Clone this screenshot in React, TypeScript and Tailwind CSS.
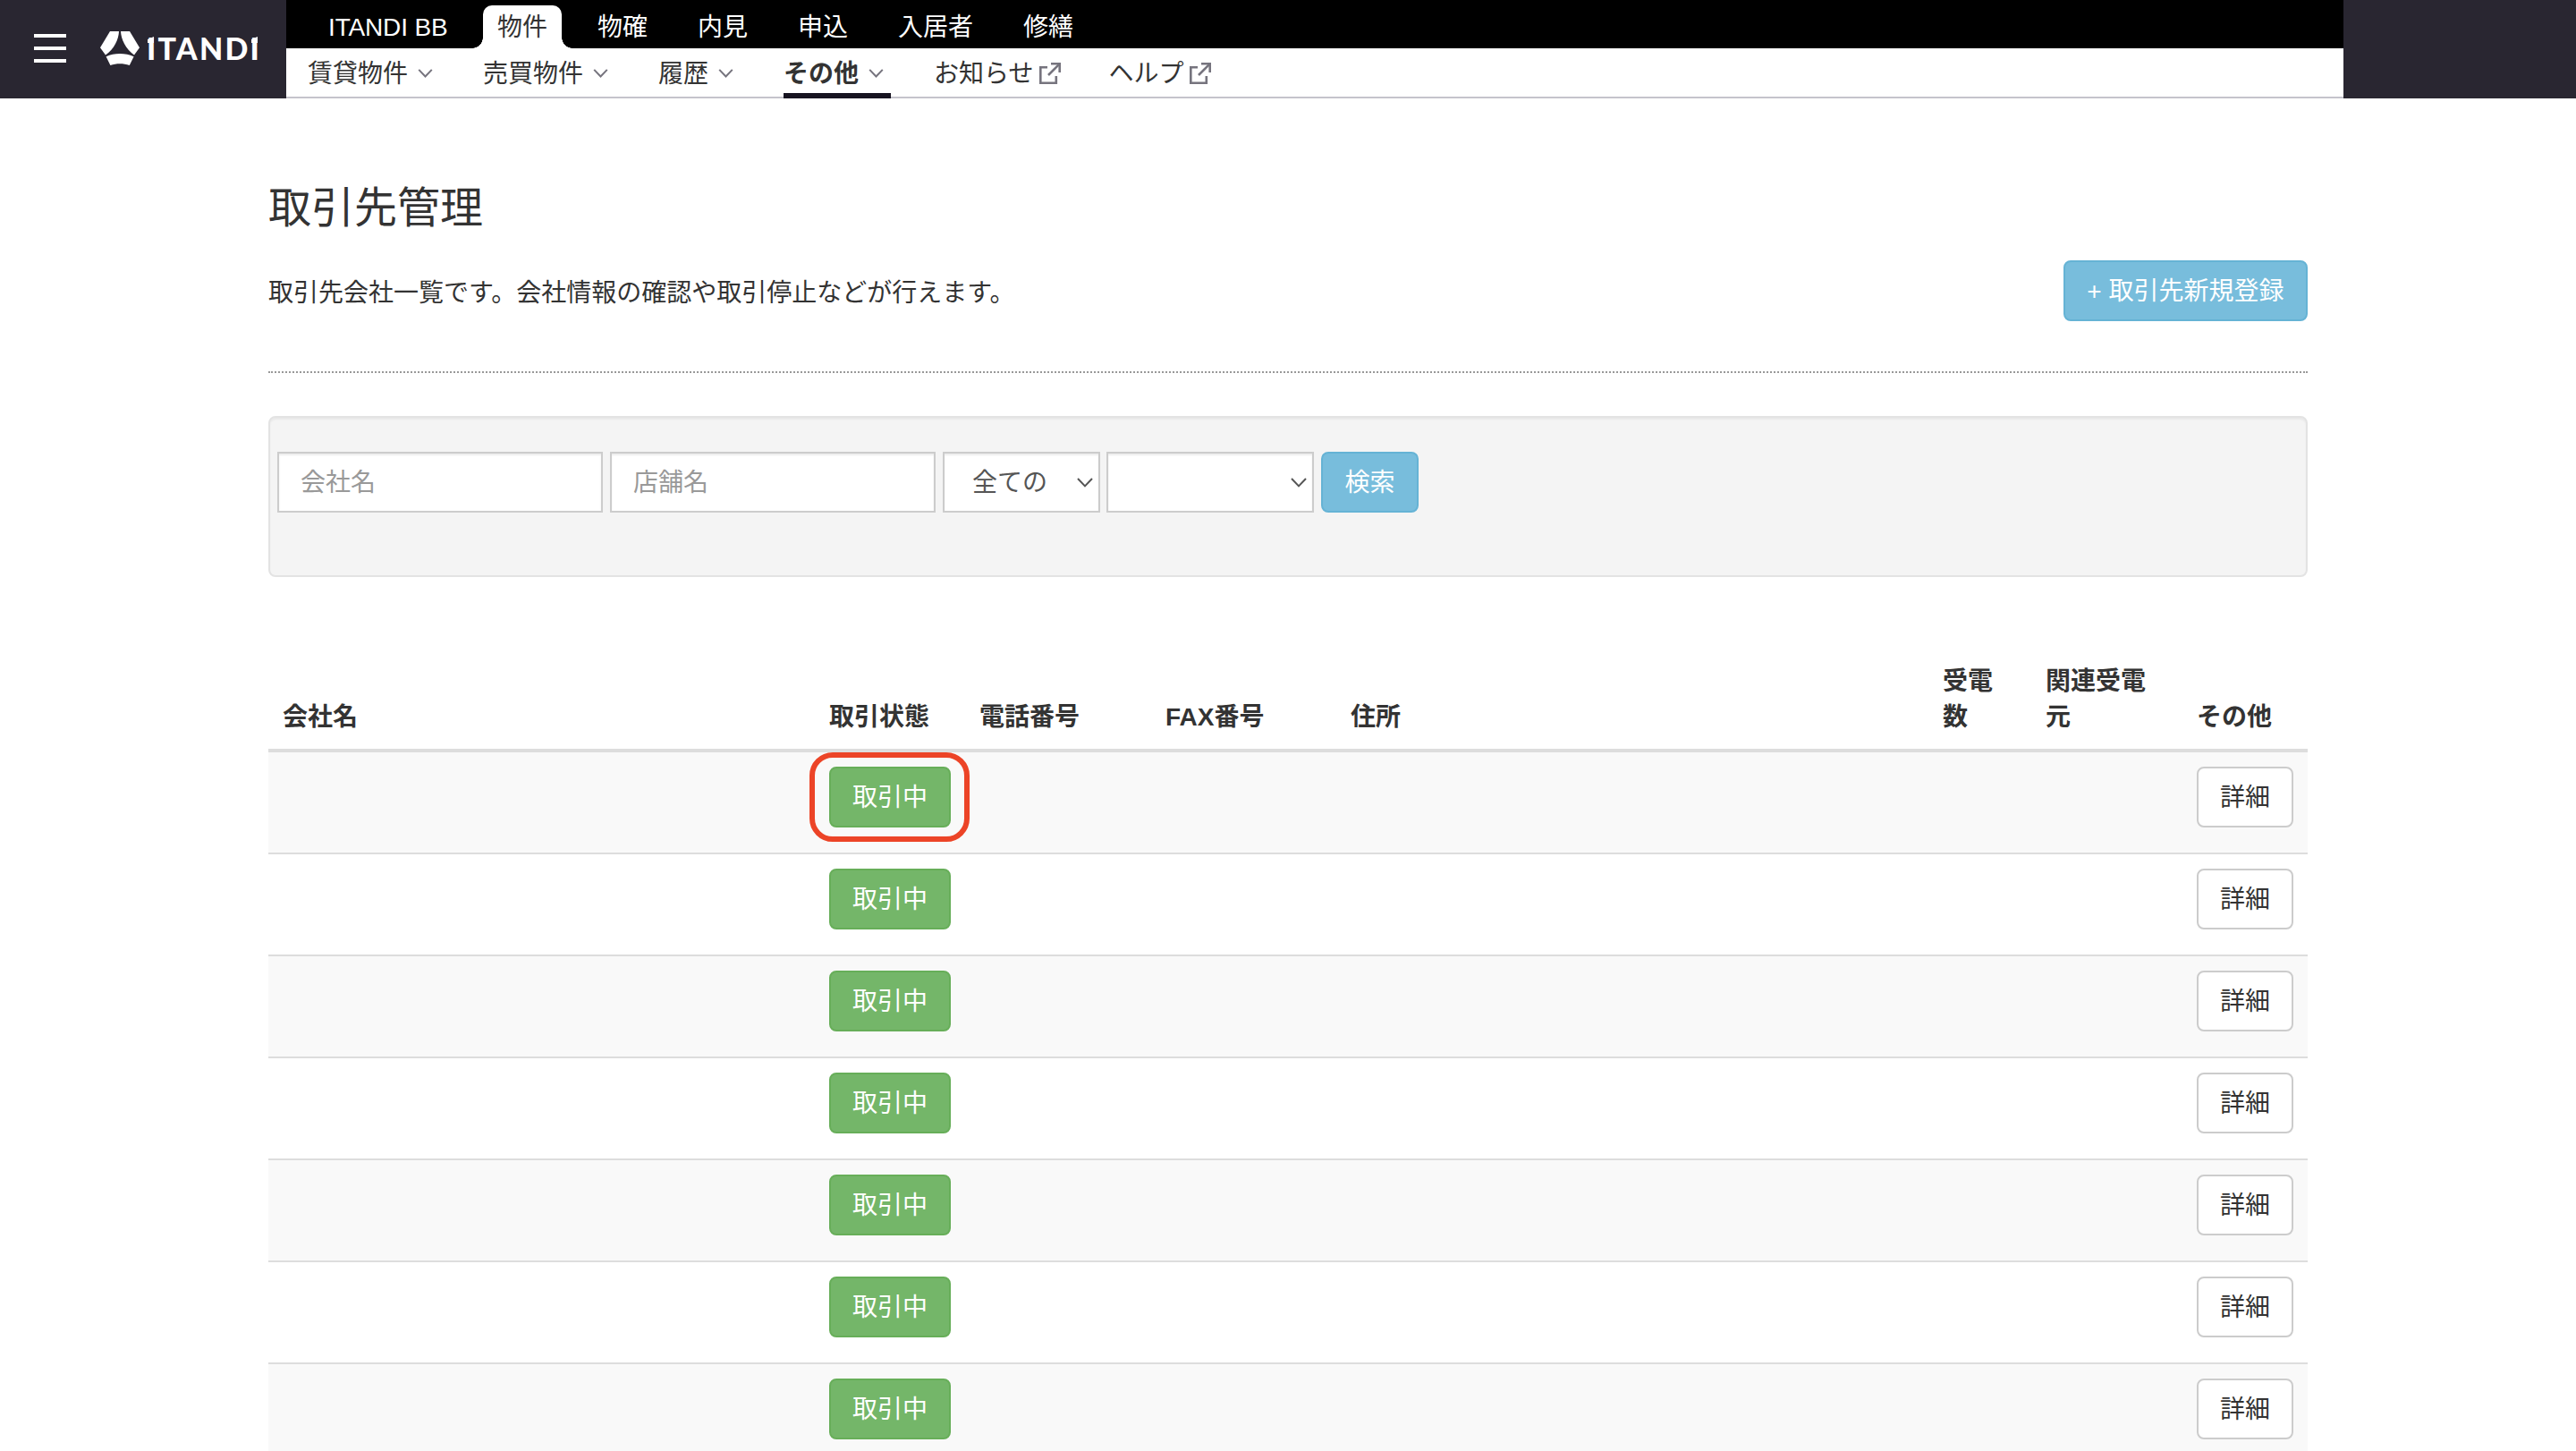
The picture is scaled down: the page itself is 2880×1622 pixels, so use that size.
import type { ReactNode } from "react";

interface MenuItem {
  label: string;
  icon: "chevron" | "external";
  active?: boolean;
}

const TABS = ["ITANDI BB", "物件", "物確", "内見", "申込", "入居者", "修繕"];
const ACTIVE_TAB = "物件";

const MENU: MenuItem[] = [
  { label: "賃貸物件", icon: "chevron" },
  { label: "売買物件", icon: "chevron" },
  { label: "履歴", icon: "chevron" },
  { label: "その他", icon: "chevron", active: true },
  { label: "お知らせ", icon: "external" },
  { label: "ヘルプ", icon: "external" },
];

const COLUMNS = [
  { label: "会社名", width: "w-[611px]" },
  { label: "取引状態", width: "w-[168px]" },
  { label: "電話番号", width: "w-[208px]" },
  { label: "FAX番号", width: "w-[207px]" },
  { label: "住所", width: "w-[662px]" },
  { label: "受電数", width: "w-[115px]" },
  { label: "関連受電元", width: "w-[169px]" },
  { label: "その他", width: "w-[140px]" },
];

const ROWS = [1, 2, 3, 4, 5, 6, 7];

function Logo() {
  return (
    <div className="flex items-center">
      <svg className="h-[38px] w-[44px]" viewBox="0 0 44 38" fill="#fff">
        <path d="M11 0H21C20.6 9 15.8 19.5 6 26.5L0 18.2Z" />
        <path d="M23 0H33L44 18.2L38 26.5C28.4 19.5 23.4 9 23 0Z" />
        <path d="M6.6 28.2C16 24 28 24 37.6 28.2L32.8 38C26 35.6 18 35.6 11.4 38Z" />
      </svg>
      <span className="relative ml-[8px] font-[Lato] text-[34px] leading-[38px] font-black tracking-[2.2px] text-white">
        ITANDI
        {/* flags on the first and last stems */}
        <svg className="absolute top-[6px] left-0 h-[8px] w-[126px]" viewBox="0 0 126 8" fill="#fff">
          <path d="M1 3L8 0V7H1Z" />
          <path d="M117 3L124 0V7H117Z" />
        </svg>
      </span>
    </div>
  );
}

function Chevron({ className }: { className: string }) {
  return (
    <svg className={className} viewBox="0 0 18 11" fill="none" stroke="currentColor">
      <path d="M1 1L9 9.4L17 1" />
    </svg>
  );
}

function ExternalIcon() {
  return (
    <svg className="mr-[6px] ml-[6px] h-6 w-6 text-[#76747e]" viewBox="0 0 24 24" fill="none" stroke="currentColor" strokeWidth="2.6">
      <path d="M9 5.2H1.3V22.7H18.8V15" />
      <path d="M13 1.3H22.7V11" />
      <path d="M22.4 1.6L10 14" />
    </svg>
  );
}

function Header() {
  return (
    <header className="flex h-[110px] bg-[#292631]">
      <div className="flex w-[320px] pt-[35px] pl-[38px]">
        <div className="mt-[3px] mr-[38px] flex h-8 w-9 flex-col justify-between">
          <span className="h-1 bg-white" />
          <span className="h-1 bg-white" />
          <span className="h-1 bg-white" />
        </div>
        <div className="h-[38px]">
          <Logo />
        </div>
      </div>
      <div className="w-[2300px]">
        <nav className="flex h-[54px] gap-6 bg-black pt-[6px] pl-[31px]">
          {TABS.map((tab) =>
            tab === ACTIVE_TAB ? (
              <div key={tab} className="relative h-12 rounded-t-[10px] bg-white px-4 leading-[50px]">
                {tab}
                <span className="absolute bottom-0 -left-[12px] h-3 w-3 bg-[radial-gradient(circle_at_0_0,transparent_11.5px,#fff_12px)]" />
                <span className="absolute -right-[12px] bottom-0 h-3 w-3 bg-[radial-gradient(circle_at_100%_0,transparent_11.5px,#fff_12px)]" />
              </div>
            ) : (
              <div
                key={tab}
                className="px-4 leading-[50px] whitespace-nowrap text-white first:w-[165px] first:tracking-[-0.15px]"
              >
                {tab}
              </div>
            ),
          )}
        </nav>
        <nav className="flex h-14 gap-12 border-b-2 border-[#c5c4cc] bg-white pl-6">
          {MENU.map((item) => (
            <div
              key={item.label}
              className={
                item.active
                  ? "flex h-14 items-center border-b-[6px] border-[#171421] font-bold"
                  : "flex h-14 items-center border-b-[6px] border-transparent"
              }
            >
              <span className="pt-[7px] leading-[43px]">{item.label}</span>
              {item.icon === "chevron" ? (
                <Chevron className="mt-[6px] mr-[8px] ml-[11px] h-[10px] w-[17px] stroke-[2.2] text-[#76747e]" />
              ) : (
                <span className="mt-[5px]">
                  <ExternalIcon />
                </span>
              )}
            </div>
          ))}
        </nav>
      </div>
    </header>
  );
}

function PrimaryButton({ children }: { children: ReactNode }) {
  return (
    <button className="h-[68px] rounded-[8px] border-2 border-[#65b3d5] bg-[#78bddc] px-[24.5px] pt-[2px] leading-[60px] whitespace-nowrap text-white">
      {children}
    </button>
  );
}

function SearchPanel() {
  const field =
    "h-[68px] border-2 border-[#ccc] bg-white shadow-[inset_0_2px_2px_rgba(0,0,0,0.075)]";
  return (
    <div className="mt-12 flex h-[180px] items-start rounded-[8px] border-2 border-[#e3e3e3] bg-[#f4f4f4] pt-[38px] pl-2 shadow-[inset_0_2px_2px_rgba(0,0,0,0.05)]">
      <input
        className={`${field} w-[364px] px-6 pt-[2px] placeholder:text-[#999] placeholder:opacity-100`}
        placeholder="会社名"
      />
      <input
        className={`${field} ml-2 w-[364px] px-6 pt-[2px] placeholder:text-[#999] placeholder:opacity-100`}
        placeholder="店舗名"
      />
      <div className={`${field} ml-2 flex w-[176px] items-center justify-between pr-[6px] pl-[31px] text-[#555]`}>
        <span className="pt-[2px]">全ての</span>
        <Chevron className="h-[11px] w-[18px] stroke-2" />
      </div>
      <div className={`${field} ml-[7px] flex w-[232px] items-center justify-end pr-[6px] text-[#555]`}>
        <Chevron className="h-[11px] w-[18px] stroke-2" />
      </div>
      <div className="ml-2">
        <PrimaryButton>検索</PrimaryButton>
      </div>
    </div>
  );
}

function PartnerTable() {
  return (
    <table className="mt-[83px] w-[2280px] table-fixed border-collapse text-left">
      <thead>
        <tr>
          {COLUMNS.map((col) => (
            <th key={col.label} className={`${col.width} p-0 align-bottom`}>
              <div className="h-[113px] content-end border-b-4 border-[#ddd] px-4 pb-[15px] leading-10 font-bold">
                {col.label}
              </div>
            </th>
          ))}
        </tr>
      </thead>
      <tbody>
        {ROWS.map((row, i) => (
          <tr key={row} className="odd:bg-[#f9f9f9]">
            {COLUMNS.map((col, c) => (
              <td key={col.label} className="p-0 align-top">
                <div
                  className={
                    i === 0 ? "h-[112px] px-4 pt-4" : "h-[114px] border-t-2 border-[#ddd] px-4 pt-4"
                  }
                >
                  {c === 1 && (
                    <div className="relative w-[136px]">
                      <button className="block h-[68px] w-[136px] rounded-[8px] border-2 border-[#67ae59] bg-[#74b669] pt-[2px] leading-[60px] text-white">
                        取引中
                      </button>
                      {i === 0 && (
                        <span className="absolute -top-4 -left-[22px] h-[100px] w-[179px] rounded-[26px] border-[6px] border-[#ec4427]" />
                      )}
                    </div>
                  )}
                  {c === COLUMNS.length - 1 && (
                    <button className="block h-[68px] w-[108px] rounded-[8px] border-2 border-[#ccc] bg-white pt-[2px] leading-[60px]">
                      詳細
                    </button>
                  )}
                </div>
              </td>
            ))}
          </tr>
        ))}
      </tbody>
    </table>
  );
}

export default function App() {
  return (
    <div
      lang="ja"
      className="h-[1622px] w-[2880px] overflow-hidden bg-white font-['Liberation_Sans','Noto_Sans_CJK_JP',sans-serif] text-[28px] leading-10 text-[#333]"
    >
      <Header />
      <main className="mx-auto w-[2280px]">
        <h1 className="pt-[93px] text-[48px] leading-[60px]">取引先管理</h1>
        <div className="mt-[28px] flex items-start justify-between">
          <p className="pt-[17px]">取引先会社一覧です。会社情報の確認や取引停止などが行えます。</p>
          <PrimaryButton>+ 取引先新規登録</PrimaryButton>
        </div>
        <div className="mt-14 border-t-2 border-dotted border-[#999]" />
        <SearchPanel />
        <PartnerTable />
      </main>
    </div>
  );
}
